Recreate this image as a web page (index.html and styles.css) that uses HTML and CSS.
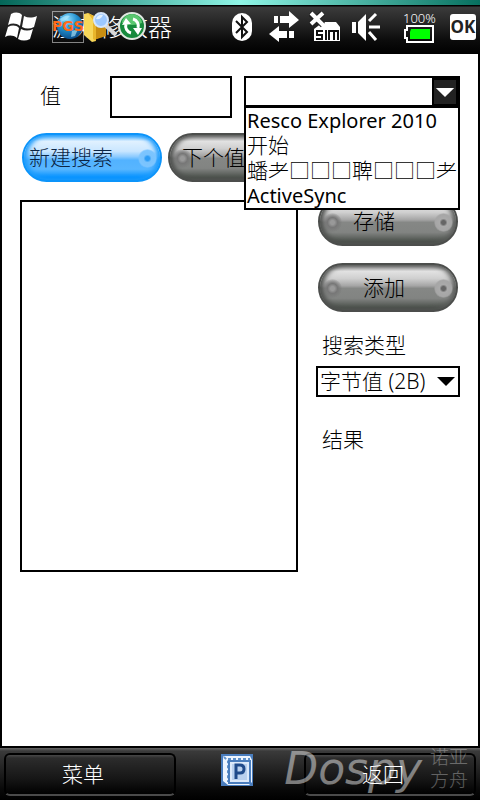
FILE: index.html
```html
<!DOCTYPE html>
<html lang="zh-CN">
<head>
    <meta charset="UTF-8">
    <meta name="viewport" content="width=device-width, initial-scale=1.0">
    <title>游戏修改器</title>
    <link rel="stylesheet" href="styles.css">
</head>
<body>
    <header class="titlebar">
        <svg class="start" viewBox="0 0 34 32" width="34" height="32">
            <path fill="#fff" d="M6 3c4-2 8-2 11 1l-2 11c-4-3-8-3-12-1zM19 5c4 2 8 2 13 0l-3 11c-4 2-8 2-12 0zM3 16c4-2 8-2 11 1l-2 10c-4-3-8-3-12-1zM16 18c4 2 8 2 12 0l-3 10c-4 2-8 2-12 0z"/>
        </svg>
        <div class="caption">
            <h1>游戏修改器</h1>
            <!-- tray icons lying over the caption -->
            <div class="tray">
                <svg viewBox="0 0 32 32" width="32" height="32">
                    <defs>
                        <radialGradient id="globe" cx="40%" cy="25%" r="75%">
                            <stop offset="0" stop-color="#8fe0ff"/>
                            <stop offset=".5" stop-color="#2391cf"/>
                            <stop offset="1" stop-color="#0b4f8c"/>
                        </radialGradient>
                    </defs>
                    <circle cx="18" cy="15" r="13" fill="url(#globe)"/>
                    <path fill="#bdeeff" opacity=".6" d="M8 8q6-5 10-3l-4 4-5 2zM20 20l6-2-3 7-4 1z"/>
                    <rect x=".5" y=".5" width="31" height="31" fill="none" stroke="#fff" stroke-dasharray="1 1"/>
                    <text class="pgs" x="16" y="20" text-anchor="middle">PGS</text>
                </svg>
                <svg viewBox="0 0 34 32" width="34" height="32">
                    <path fill="#c98e12" d="M10 6l12-3v22l-12 4z"/>
                    <path fill="#f7d75a" d="M0 3l4-1 8 4v24l-4 1-8-7z"/>
                    <path fill="#e9b62b" d="M4 2l8 4v24l-3-2V9z"/>
                    <path stroke="#d8d8d8" stroke-width="4" d="M21 14l11 10"/>
                    <circle cx="17" cy="9" r="7" fill="#9cc8ff" stroke="#d5e6fb" stroke-width="2"/>
                    <path fill="#e2f1ff" d="M12 8q2-5 7-4-2 5-7 4z"/>
                </svg>
                <svg viewBox="0 0 28 30" width="28" height="30">
                    <circle cx="14" cy="15" r="13" fill="#168a3c" stroke="#dfe8e0" stroke-width="2"/>
                    <path fill="#5ac770" d="M4 12a10 9 0 0 1 20 0q-10 4-20 0z"/>
                    <path fill="none" stroke="#fff" stroke-width="3" d="M13 22a7 7 0 0 1-5-9M15 8a7 7 0 0 1 5 9"/>
                    <path fill="#fff" d="M4 14l4-7 5 6zM15 17l9 0-4 7z"/>
                </svg>
            </div>
        </div>
        <div class="status">
            <svg class="bluetooth" viewBox="0 0 22 30" width="22" height="30">
                <rect x="1" y="1" width="20" height="28" rx="10" fill="#fff"/>
                <path fill="none" stroke="#111" stroke-width="2" d="M5 9l11 11-5 5V5l5 5L5 21"/>
            </svg>
            <svg viewBox="0 0 30 32" width="30" height="32" fill="#fff">
                <path d="M5 5h4v7H5zM11 5h9V0l10 9-10 8v-5h-9zM20 20h5v7h-5zM18 20h-8v-5L0 23l10 8v-4h8z"/>
            </svg>
            <svg viewBox="0 0 32 32" width="32" height="32">
                <path fill="#fff" d="M5 30V18l4-3 5-4h13l4 5v14z"/>
                <path fill="none" stroke="#222" stroke-width="6" d="M1 2l13 12M14 2L1 14"/>
                <path fill="none" stroke="#fff" stroke-width="4" d="M2 2l13 13M14 2L2 13"/>
                <path fill="none" stroke="#111" stroke-width="2" d="M14 20H8v4h5v4H7M17 19v10M20 29v-9h9v9M25 20v9"/>
            </svg>
            <svg viewBox="0 0 30 30" width="30" height="30">
                <path fill="#fff" d="M1 10h4v11H1zM7 10l8-8v27l-8-8z"/>
                <path stroke="#fff" stroke-width="3" d="M18 9l7-7M18 15h11M18 20l7 8"/>
            </svg>
            <div class="battery">
                <span>100%</span>
                <svg viewBox="0 0 30 18" width="30" height="18">
                    <path fill="none" stroke="#fff" stroke-width="2" d="M3 5V1h26v16H3v-4H1V5z"/>
                    <path fill="#0f0" d="M7 4h19v10H6V7z"/>
                </svg>
            </div>
            <button class="ok">OK</button>
        </div>
    </header>

    <main>
        <div class="row value-row">
            <label for="value">值</label>
            <input type="text" id="value">
            <div class="combo">
                <select id="process" aria-label="进程">
                    <option></option>
                </select>
                <svg class="combo-arrow" viewBox="0 0 24 25" width="24" height="25">
                    <path fill="#fff" d="M2 8h20L12 18z"/>
                </svg>
                <ul class="dropdown">
                    <li class="latin">Resco Explorer 2010</li>
                    <li>开始</li>
                    <li>蟠耂□□□聛□□□耂</li>
                    <li class="latin">ActiveSync</li>
                </ul>
            </div>
        </div>

        <div class="row search-row">
            <button class="pill blue">新建搜索</button>
            <button class="pill next">下个值</button>
        </div>

        <div class="row result-row">
            <div class="results"></div>
            <div class="side">
                <button class="pill save">存储</button>
                <button class="pill">添加</button>
                <label for="type">搜索类型</label>
                <div class="type">
                    <select id="type">
                        <option>字节值 (2B)</option>
                    </select>
                    <svg viewBox="0 0 18 9" width="18" height="9">
                        <path d="M0 0h18l-9 9z"/>
                    </svg>
                </div>
                <p>结果</p>
            </div>
        </div>
    </main>

    <footer>
        <button class="soft">菜单</button>
        <svg viewBox="0 0 32 32" width="32" height="32">
            <rect width="32" height="32" fill="#4a7dbd"/>
            <path fill="#eef5ff" d="M3 2h26l2 4v22l-3 3H7l-5-4V3z"/>
            <path fill="none" stroke="#5f92cc" stroke-width="2" stroke-dasharray="3 2" d="M3 3l4 4v21M7 5h22"/>
            <rect x="8" y="7" width="21" height="22" fill="#dce9fa" stroke="#4a7dbd" stroke-width="2"/>
            <rect x="11" y="10" width="15" height="16" fill="#b9d0ee"/>
            <path fill="none" stroke="#1f4a8a" stroke-width="3" d="M15 25V11h4q4 0 4 4t-4 4h-4"/>
        </svg>
        <button class="soft">返回</button>
        <div class="watermark">
            <span class="brand">Dospy</span>
            <span class="ark">诺亚<br>方舟</span>
        </div>
    </footer>
</body>
</html>
```
FILE: styles.css
```css
* {
    box-sizing: border-box;
}

body {
    margin: 0;
    min-height: 100vh;
    display: flex;
    flex-direction: column;
    background: #000;
    color: #000;
    font-family: "Noto Sans", "Noto Sans CJK SC", sans-serif;
    font-size: 21px;
    font-weight: 300;
    line-height: 25px;
}

button, input, select {
    font: inherit;
    color: inherit;
    margin: 0;
    padding: 0;
    border: none;
    border-radius: 0;
}

svg {
    display: block;
    flex: none;
}

/* title bar */
.titlebar {
    height: 54px;
    padding: 0 4px 0 5px;
    display: flex;
    align-items: center;
    background:
        linear-gradient(to right, #046658, #8ff5e6 50%, #07705f) top / 100% 5px no-repeat,
        linear-gradient(#000 6px, #3b3b3b 7px, #242424 24px, #0c0c0c 40px, #000 54px);
}

.caption {
    position: relative;
    margin-left: 13px;
    flex: 1;
}

h1 {
    margin: 0;
    color: #fff;
    font-size: 24px;
    font-weight: 300;
    line-height: 32px;
}

.tray {
    position: absolute;
    top: 0;
    left: 0;
    display: flex;
}

.pgs {
    font: bold 14px "DejaVu Sans", sans-serif;
    fill: #ff6a1a;
}

.status {
    display: flex;
    align-items: center;
    gap: 10px;
}

.bluetooth {
    margin-right: 6px;
}

.battery {
    width: 34px;
    margin: 0 3px 0 12px;
    color: #fff;
    font-size: 13px;
    line-height: 13px;
}

.battery svg {
    margin-left: 1px;
}

.ok {
    width: 26px;
    height: 26px;
    border-radius: 3px;
    background: #fff;
    color: #222;
    font: bold 17px/26px "Open Sans", sans-serif;
}

/* form */
main {
    flex: 1;
    margin: 0 2px;
    padding: 22px 18px;
    background: #fff;
}

.row {
    display: flex;
}

.value-row label {
    width: 90px;
    padding: 7px 0 0 20px;
}

#value {
    width: 122px;
    height: 42px;
    border: 2px solid #000;
    background: #fff;
}

.combo {
    position: relative;
    flex: 1;
    margin-left: 12px;
}

.combo select {
    display: block;
    width: 100%;
    height: 31px;
    border: 2px solid #000;
    background: #fff;
    appearance: none;
}

.combo-arrow {
    position: absolute;
    top: 2px;
    right: 2px;
    border: 2px solid #000;
    width: 26px;
    height: 28px;
    background: #222;
    pointer-events: none;
}

.dropdown {
    position: absolute;
    z-index: 10;
    top: 30px;
    left: 0;
    right: 0;
    margin: 0;
    padding: 0 1px;
    border: 2px solid #000;
    background: #fff;
    list-style: none;
    white-space: nowrap;
}

.dropdown li {
    height: 25px;
}

.dropdown .latin {
    font-size: 20px;
    font-weight: 400;
}

.search-row {
    margin-top: 15px;
    padding-left: 2px;
    gap: 6px;
}

/* glossy capsule buttons */
.pill {
    position: relative;
    width: 140px;
    height: 49px;
    border: 2px solid #4c4e4c;
    border-radius: 25px;
    background: linear-gradient(#8a8a8a, #e2e2e2 14%, #cfcfcf 30%, #a6a6a6 46%, #858785 52%, #828482 74%, #4a504a 95%);
    box-shadow: inset 3px 0 5px #4c4e4c, inset -3px 0 5px #5c5e5c;
    color: #000;
}

.pill::before,
.pill::after {
    content: "";
    position: absolute;
    top: 14px;
    width: 19px;
    height: 19px;
    border-radius: 50%;
}

.pill::before {
    left: 3px;
    background: radial-gradient(#999 2px, #777 5px, transparent 10px);
}

.pill::after {
    right: 3px;
    background: radial-gradient(#666 2px, #aaa 4px, #a6a6a6 8px, transparent 10px);
}

.blue {
    padding: 0 0 0 5px;
    border-color: #0c94fa;
    background: linear-gradient(#5cb8ff, #e0f1ff 14%, #c9e6ff 36%, #8dcbff 48%, #52b2ff 56%, #58b6ff 76%, #0592ff 94%);
    box-shadow: inset 3px 0 5px #1b9bfc, inset -3px 0 5px #1b9bfc;
    color: #0b2545;
    text-align: left;
}

.blue::before {
    display: none;
}

.blue::after {
    background: radial-gradient(#2c9cf5 2px, #7ac3fd 4px, #7cc5ff 8px, transparent 10px);
}

.next {
    padding-left: 12px;
    text-align: left;
}

.result-row {
    margin-top: 15px;
    gap: 18px;
}

.results {
    flex: 1;
    height: 372px;
    margin-top: 3px;
    border: 2px solid #000;
}

.side {
    width: 144px;
}

.side .pill {
    display: block;
    margin: 0 0 17px 2px;
    padding-right: 8px;
}

.side .save {
    padding-right: 28px;
}

.side label {
    display: block;
    margin: 21px 0 8px;
    padding-left: 6px;
}

.type {
    position: relative;
}

.type select {
    display: block;
    width: 100%;
    height: 31px;
    padding-left: 2px;
    border: 2px solid #000;
    background: #fff;
    appearance: none;
}

.type svg {
    position: absolute;
    top: 11px;
    right: 5px;
    pointer-events: none;
}

.side p {
    margin: 30px 0 0;
    padding-left: 6px;
}

/* soft key bar */
footer {
    position: relative;
    height: 54px;
    padding: 0 4px;
    display: flex;
    align-items: center;
    justify-content: space-between;
    background: linear-gradient(#000 2px, #666 2px, #3a3a3a 5px, #242424 22px, #080808 44px, #000);
}

footer svg {
    margin: -6px 6px 0 0;
}

.soft {
    width: 172px;
    height: 43px;
    margin-top: 2px;
    padding-right: 14px;
    border: 2px solid #000;
    border-bottom-color: #4a4a4a;
    border-radius: 6px;
    background: linear-gradient(#484848, #2c2c2c 3px, #161616 24px, #000);
    color: #fff;
}

.watermark {
    position: absolute;
    right: 12px;
    bottom: 5px;
    display: flex;
    align-items: center;
    gap: 8px;
    color: #fff;
    opacity: 0.45;
    pointer-events: none;
}

.brand {
    font: italic 44px/52px "DejaVu Sans", sans-serif;
}

.ark {
    font-size: 19px;
    line-height: 23px;
    opacity: 0.7;
}
```
